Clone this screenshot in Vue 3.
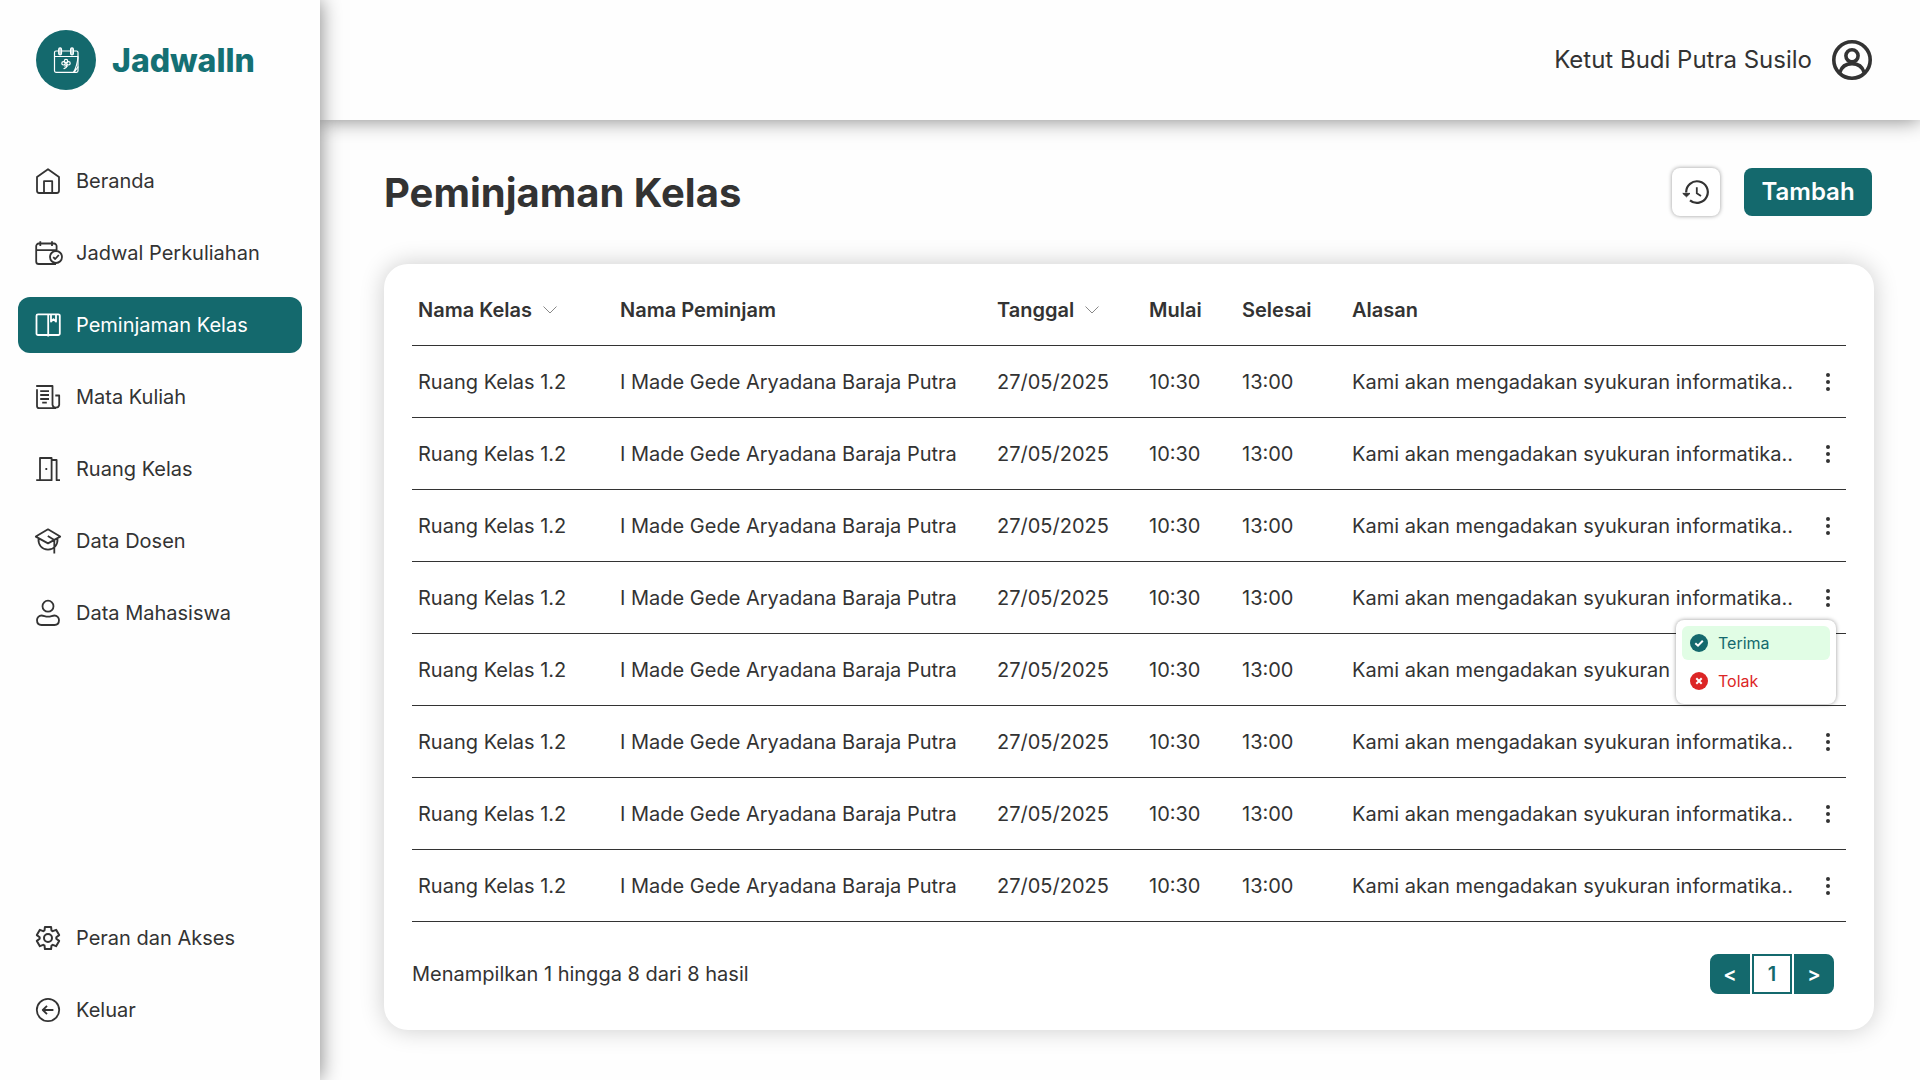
<script setup>
import { ref } from 'vue'

const mainMenu = [
  { label: 'Beranda', icon: 'home' },
  { label: 'Jadwal Perkuliahan', icon: 'schedule' },
  { label: 'Peminjaman Kelas', icon: 'book', active: true },
  { label: 'Mata Kuliah', icon: 'course' },
  { label: 'Ruang Kelas', icon: 'door' },
  { label: 'Data Dosen', icon: 'lecturer' },
  { label: 'Data Mahasiswa', icon: 'student' },
]
const bottomMenu = [
  { label: 'Peran dan Akses', icon: 'gear' },
  { label: 'Keluar', icon: 'exit' },
]
const menus = [
  { key: 'menu-top', label: 'Menu utama', items: mainMenu },
  { key: 'menu-bottom', label: 'Akun', items: bottomMenu },
]

const icons = {
  home: { box: '0 0 28 28', d: 'M3 10 14 2.2 25 10V23.8a2.2 2.2 0 0 1-2.2 2.2H5.2A2.2 2.2 0 0 1 3 23.8ZM10 26V14.2h8.2V26' },
  schedule: { box: '0 0 28 28', d: 'M22 25H4.8A2.6 2.6 0 0 1 2.2 22.4V7.1A2.6 2.6 0 0 1 4.8 4.5H20A2.6 2.6 0 0 1 22.6 7.1V11.5M2.2 11.2H22.6M6.3 2.2V7M18 2.2V7M28 18a6 6 0 1 1-12 0a6 6 0 0 1 12 0M19.2 18.2 21.2 20 24.8 16' },
  book: { box: '0 0 28 28', d: 'M4 3.3H24.3A1.5 1.5 0 0 1 25.8 4.8V22.5A1.5 1.5 0 0 1 24.3 24H4A1.5 1.5 0 0 1 2.5 22.5V4.8A1.5 1.5 0 0 1 4 3.3ZM14.2 3.3V25.6M17 3.3V10.6L19.5 8.2 22 10.6V3.3' },
  course: { box: '0 0 28 28', d: 'M2.2 3H18.5V21.8A3.4 3.4 0 0 0 25.2 21.8V12.5H21.3M3 6.2V23A2.2 2.2 0 0 0 5.2 25.2H22M6.2 8.2H15M6.2 12H15M6.2 16H15M8.2 19.6H12.8' },
  door: { box: '0 0 28 28', d: 'M2.2 25.2H17.6V3H6V25.2M17.6 5H22.6V25.2H26M12.3 13V15' },
  lecturer: { box: '0 0 28 28', d: 'M1.8 9.6 14 2.3 26.2 9.6 14 16.4ZM4.5 11.4C4 18 8 22.7 14 22.7S24 18 23.5 11.4M13.8 9 20.3 13V26.4' },
  student: { box: '0 0 28 28', d: 'M19.5 7.2a5.5 5.5 0 1 1-11 0a5.5 5.5 0 0 1 11 0M7.5 16.5C10 16.5 11 17.7 14 17.7S18 16.5 20.5 16.5A4.5 4.5 0 0 1 25 21C25 24 23.5 26 20.5 26H7.5C4.5 26 3 24 3 21A4.5 4.5 0 0 1 7.5 16.5Z' },
  gear: { box: '-0.6 -0.6 25.2 25.2', d: 'M9.25 22l-.4-3.2q-.325-.125-.612-.3t-.563-.375L4.7 19.375l-2.75-4.75l2.575-1.95Q4.5 12.5 4.5 12.338v-.675q0-.163.025-.338L1.95 9.375l2.75-4.75l2.975 1.25q.275-.2.575-.375t.6-.3l.4-3.2h5.5l.4 3.2q.325.125.613.3t.562.375l2.975-1.25l2.75 4.75l-2.575 1.95q.025.175.025.338v.674q0 .163-.05.338l2.575 1.95l-2.75 4.75l-2.95-1.25q-.275.2-.575.375t-.6.3l-.4 3.2zM15.6 12a3.6 3.6 0 1 1-7.2 0a3.6 3.6 0 0 1 7.2 0' },
  exit: { box: '0 0 28 28', d: 'M25.2 14a11.2 11.2 0 1 1-22.4 0a11.2 11.2 0 0 1 22.4 0M19.4 14H9M13 9.8 8.8 14 13 18.2' },
}

const columns = [
  { label: 'Nama Kelas', cls: 'col-class', sortable: true },
  { label: 'Nama Peminjam', cls: 'col-borrower' },
  { label: 'Tanggal', cls: 'col-date', sortable: true },
  { label: 'Mulai', cls: 'col-start' },
  { label: 'Selesai', cls: 'col-end' },
  { label: 'Alasan', cls: 'col-reason' },
]

const rows = Array.from({ length: 8 }, (_, i) => ({
  id: i + 1,
  room: 'Ruang Kelas 1.2',
  borrower: 'I Made Gede Aryadana Baraja Putra',
  date: '27/05/2025',
  start: '10:30',
  end: '13:00',
  reason: 'Kami akan mengadakan syukuran informatika..',
}))

const openRow = ref(4)
const toggle = (id) => {
  openRow.value = openRow.value === id ? null : id
}
</script>

<template>
  <div class="app">
    <aside class="sidebar">
      <a class="brand" href="#">
        <svg class="brand-mark" viewBox="0 0 60 60" aria-hidden="true">
          <circle cx="30" cy="30" r="30" fill="#14696d" />
          <g fill="none" stroke="#fff" stroke-width="1.2" stroke-linejoin="round" stroke-linecap="round">
            <rect x="18.5" y="21" width="23.5" height="21.3" rx="1.5" />
            <path d="M18.5 26.5H42M42 27C41.5 33 40 38 37.5 42.3M42 37 38 42.3" />
            <rect x="22.7" y="17.8" width="2.8" height="7" rx="1.4" fill="#b7d3d4" />
            <rect x="34.6" y="17.8" width="2.8" height="7" rx="1.4" fill="#b7d3d4" />
            <circle cx="30" cy="31" r="1.7" />
            <circle cx="27.5" cy="33.3" r="1.7" />
            <circle cx="32.5" cy="33.3" r="1.7" />
            <path d="M30 32.5V36M28 38.6C30.5 38 31 37 31 35M28.5 36H31.5" />
          </g>
        </svg>
        <span class="brand-name">Jadwalln</span>
      </a>
      <nav v-for="menu in menus" :key="menu.key" class="menu" :class="menu.key" :aria-label="menu.label">
        <a
          v-for="item in menu.items"
          :key="item.label"
          href="#"
          class="menu-item"
          :class="{ active: item.active }"
        >
          <svg class="menu-icon" :viewBox="icons[item.icon].box" aria-hidden="true">
            <path :d="icons[item.icon].d" />
          </svg>
          <span>{{ item.label }}</span>
        </a>
      </nav>
    </aside>

    <div class="content">
      <header class="topbar">
        <span class="user-name">Ketut Budi Putra Susilo</span>
        <button class="avatar" type="button" aria-label="Profil">
          <svg viewBox="0 0 40 40" aria-hidden="true">
            <circle cx="20" cy="20" r="18.2" />
            <circle cx="20" cy="15.8" r="6.1" />
            <path d="M7.8 32.5C9.5 27 14 23.6 20 23.6S30.5 27 32.2 32.5" />
          </svg>
        </button>
      </header>

      <main class="main">
        <div class="toolbar">
          <h1>Peminjaman Kelas</h1>
          <button class="history" type="button" aria-label="Riwayat">
            <svg viewBox="0 0 28 28" aria-hidden="true">
              <path d="M4.2 14.5A10.8 10.8 0 1 1 8 22.3" stroke-width="2.2" />
              <path d="M14.8 9.2V15.2L19 18" stroke-width="1.8" />
              <path d="M.8 15.4H8L4.5 18.8Z" class="solid" />
            </svg>
          </button>
          <button class="add" type="button">Tambah</button>
        </div>

        <section class="card">
          <table>
            <thead>
              <tr>
                <th v-for="col in columns" :key="col.label" scope="col" :class="col.cls">
                  <button v-if="col.sortable" class="sort" type="button">
                    <span>{{ col.label }}</span>
                    <svg viewBox="0 0 14 8" aria-hidden="true"><path d="M.5.5 7 7 13.5.5" /></svg>
                  </button>
                  <template v-else>{{ col.label }}</template>
                </th>
                <td class="col-action"></td>
              </tr>
            </thead>
            <tbody>
              <tr v-for="row in rows" :key="row.id">
                <td>{{ row.room }}</td>
                <td>{{ row.borrower }}</td>
                <td>{{ row.date }}</td>
                <td>{{ row.start }}</td>
                <td>{{ row.end }}</td>
                <td>{{ row.reason }}</td>
                <td class="action">
                  <button class="dots" type="button" aria-label="Aksi" @click="toggle(row.id)">
                    <svg viewBox="0 0 4 18" aria-hidden="true">
                      <circle cx="2" cy="2" r="2" />
                      <circle cx="2" cy="9" r="2" />
                      <circle cx="2" cy="16" r="2" />
                    </svg>
                  </button>
                  <div v-if="openRow === row.id" class="popup">
                    <button class="choice accept" type="button">
                      <svg viewBox="0 0 18 18" aria-hidden="true">
                        <circle cx="9" cy="9" r="9" />
                        <path d="M5.3 9.2 8 11.7 12.8 6.7" />
                      </svg>
                      Terima
                    </button>
                    <button class="choice reject" type="button">
                      <svg viewBox="0 0 18 18" aria-hidden="true">
                        <circle cx="9" cy="9" r="9" />
                        <path d="M6.3 6.3 11.7 11.7M11.7 6.3 6.3 11.7" />
                      </svg>
                      Tolak
                    </button>
                  </div>
                </td>
              </tr>
            </tbody>
          </table>

          <footer class="card-footer">
            <p>Menampilkan 1 hingga 8 dari 8 hasil</p>
            <nav class="pager" aria-label="Halaman">
              <button class="page prev" type="button">&lt;</button>
              <button class="page current" type="button">1</button>
              <button class="page next" type="button">&gt;</button>
            </nav>
          </footer>
        </section>
      </main>
    </div>
  </div>
</template>

<style>
body {
  margin: 0;
  background: #fefefe;
}
</style>

<style scoped>
.app {
  --teal: #14696d;
  --ink: #333;
  --paper: #fefefe;
  display: flex;
  min-height: 100vh;
  background: var(--paper);
  color: var(--ink);
  font-family: Inter, "Liberation Sans", sans-serif;
  font-size: 20px;
  line-height: 24px;
}
.app *,
.app {
  box-sizing: border-box;
}
button {
  margin: 0;
  padding: 0;
  border: 0;
  background: none;
  color: inherit;
  font: inherit;
  cursor: pointer;
}
a {
  color: inherit;
  text-decoration: none;
}
svg {
  display: block;
  flex: none;
}

.sidebar {
  z-index: 2;
  display: flex;
  flex: none;
  flex-direction: column;
  width: 320px;
  padding: 30px 18px 42px;
  background: var(--paper);
  box-shadow: 0 0 20px rgba(0, 0, 0, 0.5);
}
.brand {
  display: flex;
  align-items: center;
  gap: 16px;
  margin-bottom: 63px;
  padding-left: 18px;
}
.brand-mark {
  width: 60px;
  height: 60px;
}
.brand-name {
  padding-top: 2px;
  color: #147074;
  font-size: 32px;
  font-weight: 800;
  line-height: 40px;
}
.menu {
  display: flex;
  flex-direction: column;
  gap: 16px;
}
.menu-bottom {
  margin-top: auto;
}
.menu-item {
  display: flex;
  align-items: center;
  gap: 14px;
  height: 56px;
  padding: 0 16px;
  border-radius: 12px;
}
.menu-item.active {
  background: var(--teal);
  color: #fff;
}
.menu-icon {
  width: 28px;
  height: 28px;
  overflow: visible;
  fill: none;
  stroke: currentColor;
  stroke-width: 1.8;
  stroke-linejoin: round;
}

.content {
  display: flex;
  flex: 1;
  flex-direction: column;
  min-width: 0;
}
.topbar {
  display: flex;
  align-items: center;
  justify-content: flex-end;
  gap: 20px;
  height: 120px;
  padding: 0 48px;
  background: var(--paper);
  box-shadow: 0 0 20px rgba(0, 0, 0, 0.5);
}
.user-name {
  font-size: 24px;
  line-height: 32px;
}
.avatar svg {
  width: 40px;
  height: 40px;
  fill: none;
  stroke: var(--ink);
  stroke-width: 3.6;
}

.main {
  padding: 47px 46px 50px 64px;
}
.toolbar {
  display: flex;
  align-items: center;
  margin-bottom: 47px;
  padding-right: 2px;
}
h1 {
  flex: 1;
  margin: 0;
  padding-top: 2px;
  font-size: 40px;
  font-weight: 700;
  line-height: 48px;
}
.history {
  display: grid;
  place-items: center;
  width: 48px;
  height: 48px;
  margin: 1px 24px 1px 0;
  border-radius: 8px;
  background: #fff;
  box-shadow: 0 0 4px rgba(0, 0, 0, 0.4);
}
.history svg {
  width: 28px;
  height: 28px;
  fill: none;
  stroke: var(--ink);
}
.history .solid {
  fill: var(--ink);
}
.add {
  width: 128px;
  height: 48px;
  border-radius: 8px;
  background: var(--teal);
  color: #fff;
  font-size: 24px;
  font-weight: 600;
}

.card {
  padding: 10px 28px 36px;
  border-radius: 24px;
  background: #fff;
  box-shadow: 0 0 24px rgba(0, 0, 0, 0.2);
}
table {
  width: 100%;
  border-collapse: separate;
  border-spacing: 0;
  table-layout: fixed;
}
th,
td {
  height: 72px;
  padding: 0 0 0 6px;
  border-bottom: 1px solid var(--ink);
  text-align: left;
  vertical-align: middle;
  white-space: nowrap;
}
th {
  font-weight: 600;
}
.col-class {
  width: 202px;
}
.col-borrower {
  width: 377px;
}
.col-date {
  width: 152px;
}
.col-start {
  width: 93px;
}
.col-end {
  width: 110px;
}
.col-action {
  width: 36px;
}
.sort {
  display: flex;
  align-items: center;
  gap: 11px;
}
.sort svg {
  width: 14px;
  height: 8px;
  fill: none;
  stroke: #888;
}
.action {
  position: relative;
  padding: 0;
}
.dots {
  display: grid;
  place-items: center;
  width: 36px;
  height: 36px;
}
.dots svg {
  width: 4px;
  height: 18px;
  fill: var(--ink);
}
.popup {
  position: absolute;
  z-index: 1;
  top: 58px;
  right: 10px;
  display: flex;
  flex-direction: column;
  gap: 4px;
  width: 160px;
  padding: 6px;
  border-radius: 8px;
  background: #fff;
  box-shadow: 0 0 4px rgba(0, 0, 0, 0.4);
}
.choice {
  display: flex;
  align-items: center;
  gap: 10px;
  height: 34px;
  padding: 0 8px;
  border-radius: 6px;
  font-size: 16px;
}
.choice svg {
  width: 18px;
  height: 18px;
  fill: currentColor;
}
.choice path {
  fill: none;
  stroke: #fff;
  stroke-width: 2;
}
.accept {
  background: #e1fde5;
  color: var(--teal);
}
.reject {
  color: #dc2626;
}

.card-footer {
  display: flex;
  align-items: center;
  justify-content: space-between;
  margin-top: 32px;
  padding-right: 12px;
}
.card-footer p {
  margin: 0;
}
.pager {
  display: flex;
  gap: 2px;
}
.page {
  width: 40px;
  height: 40px;
  border: 2px solid var(--teal);
  background: var(--teal);
  color: #fff;
  font-weight: 600;
}
.prev {
  border-radius: 8px 0 0 8px;
}
.next {
  border-radius: 0 8px 8px 0;
}
.current {
  background: #fff;
  color: var(--teal);
}
</style>
